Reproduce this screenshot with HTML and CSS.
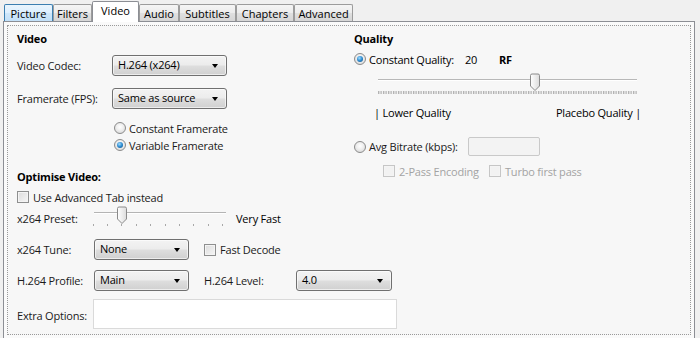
FILE: index.html
```html
<!DOCTYPE html>
<html>
<head>
<meta charset="utf-8">
<link rel="stylesheet" href="styles.css">
</head>
<body>
<div class="window">
  <div class="tabs">
    <div class="tab hover w49">Picture</div>
    <div class="tab w39">Filters</div>
    <div class="tab active w47">Video</div>
    <div class="tab w40">Audio</div>
    <div class="tab w57">Subtitles</div>
    <div class="tab w58">Chapters</div>
    <div class="tab w59">Advanced</div>
  </div>
  <div class="panel">
    <div class="inner">
      <div class="col left">
        <div class="heading">Video</div>
        <div class="row r-codec">
          <span class="lbl w95">Video Codec:</span>
          <div class="combo w115">H.264 (x264)</div>
        </div>
        <div class="row r-fps">
          <span class="lbl w95">Framerate (FPS):</span>
          <div class="combo w115">Same as source</div>
        </div>
        <div class="opt r-rad1"><span class="radio"></span>Constant Framerate</div>
        <div class="opt r-rad2"><span class="radio checked"></span>Variable Framerate</div>

        <div class="heading r-optim">Optimise Video:</div>
        <div class="opt r-adv"><span class="check"></span>Use Advanced Tab instead</div>
        <div class="row r-preset">
          <span class="lbl w76">x264 Preset:</span>
          <svg class="preset-slider" width="134" height="24" viewBox="0 0 134 24">
            <defs>
              <linearGradient id="thumbA" x1="0" y1="0" x2="1" y2="0">
                <stop offset="0" stop-color="#ffffff"/>
                <stop offset="1" stop-color="#dcdcdc"/>
              </linearGradient>
            </defs>
            <line x1="1" y1="6.5" x2="133" y2="6.5" stroke="#b4b4b4" stroke-width="1"/>
            <line x1="1" y1="7.5" x2="133" y2="7.5" stroke="#ffffff" stroke-width="1"/>
            <g fill="#a8a8a8">
              <rect x="0" y="18" width="1" height="2"/>
              <rect x="14" y="18" width="1" height="2"/>
              <rect x="28" y="18" width="1" height="2"/>
              <rect x="43" y="18" width="1" height="2"/>
              <rect x="57" y="18" width="1" height="2"/>
              <rect x="72" y="18" width="1" height="2"/>
              <rect x="86" y="18" width="1" height="2"/>
              <rect x="100" y="18" width="1" height="2"/>
              <rect x="115" y="18" width="1" height="2"/>
              <rect x="129" y="18" width="1" height="2"/>
            </g>
            <path d="M24.5 2.5 a1.5 1.5 0 0 1 1.5 -1.5 h6 a1.5 1.5 0 0 1 1.5 1.5 v10.5 l-4.5 4.5 l-4.5 -4.5 z" fill="url(#thumbA)" stroke="#8a8a8a" stroke-width="1"/>
          </svg>
          <span class="after-slider">Very Fast</span>
        </div>
        <div class="row r-tune">
          <span class="lbl w77">x264 Tune:</span>
          <div class="combo w95">None</div>
          <span class="opt inline ml15"><span class="check"></span>Fast Decode</span>
        </div>
        <div class="row r-profile">
          <span class="lbl w77">H.264 Profile:</span>
          <div class="combo w95">Main</div>
          <span class="lbl w92 ml15">H.264 Level:</span>
          <div class="combo w96">4.0</div>
        </div>
        <div class="row r-extra">
          <span class="lbl w76 extra-lbl">Extra Options:</span>
          <div class="textarea"></div>
        </div>
      </div>

      <div class="col right">
        <div class="heading">Quality</div>
        <div class="row r-cq">
          <span class="radio checked"></span>
          <span class="w96">Constant Quality:</span>
          <span class="w34">20</span>
          <span class="bold">RF</span>
        </div>
        <svg class="quality-slider" width="262" height="24" viewBox="0 0 262 24">
          <defs>
            <linearGradient id="thumbB" x1="0" y1="0" x2="1" y2="0">
              <stop offset="0" stop-color="#ffffff"/>
              <stop offset="1" stop-color="#dcdcdc"/>
            </linearGradient>
            <pattern id="ticks" x="2" y="0" width="2.5" height="24" patternUnits="userSpaceOnUse">
              <rect x="0" y="19" width="1.3" height="3" fill="#b0b0b0"/>
            </pattern>
          </defs>
          <line x1="2" y1="7.5" x2="261" y2="7.5" stroke="#b8b8b8" stroke-width="1"/>
          <line x1="2" y1="8.5" x2="261" y2="8.5" stroke="#ffffff" stroke-width="1"/>
          <rect x="2" y="19" width="259" height="3" fill="url(#ticks)"/>
          <path d="M154.5 3.5 a1.5 1.5 0 0 1 1.5 -1.5 h6 a1.5 1.5 0 0 1 1.5 1.5 v10.5 l-4.5 4.5 l-4.5 -4.5 z" fill="url(#thumbB)" stroke="#8a8a8a" stroke-width="1"/>
        </svg>
        <div class="scale-labels">
          <span>| Lower Quality</span>
          <span>Placebo Quality |</span>
        </div>
        <div class="row r-avg">
          <span class="radio"></span>
          <span class="w99">Avg Bitrate (kbps):</span>
          <div class="textbox disabled"></div>
        </div>
        <div class="row r-pass">
          <span class="opt inline disabled w106"><span class="check dis"></span>2-Pass Encoding</span>
          <span class="opt inline disabled"><span class="check dis"></span>Turbo first pass</span>
        </div>
      </div>
    </div>
  </div>
</div>
</body>
</html>
```

FILE: styles.css
```css
* { box-sizing: border-box; }

body {
  margin: 0;
  width: 700px;
  height: 338px;
  overflow: hidden;
  background: #f0f0f0;
  font-family: "Open Sans", "Noto Sans", sans-serif;
  font-size: 11px;
  letter-spacing: -0.2px;
  color: #1a1a1a;
}

.window {
  padding: 0 5px 0 3px;
  height: 338px;
  overflow: hidden;
}

/* tabs */
.tabs {
  display: flex;
  align-items: flex-end;
  height: 21px;
  padding-left: 1px;
  position: relative;
  z-index: 2;
  letter-spacing: 0;
}

.tab {
  height: 17px;
  border: 1px solid #9c9c9c;
  border-bottom: none;
  border-radius: 2px 2px 0 0;
  background: linear-gradient(#f5f5f5, #ececec 50%, #e0e0e0 50%, #d6d6d6);
  display: flex;
  align-items: center;
  justify-content: center;
  line-height: 15px;
  color: #000;
}

.tab.hover {
  border-color: #3c7fb1;
  background: linear-gradient(#eaf5fd, #dcefff 50%, #cfe7fa 50%, #c2e0f8);
}

.tab.active {
  height: 21px;
  margin-bottom: -1px;
  background: #ffffff;
  border-color: #8c8e94;
  padding-bottom: 3px;
}

.w39 { width: 39px; flex: none; }
.w40 { width: 40px; flex: none; }
.w47 { width: 47px; flex: none; }
.w49 { width: 49px; flex: none; }
.w57 { width: 57px; flex: none; }
.w58 { width: 58px; flex: none; }
.w59 { width: 59px; flex: none; }

/* panel */
.panel {
  border: 1px solid #8c8e94;
  border-bottom: none;
  background: #fafafa;
  padding: 3px 3px 0 3px;
  height: 317px;
}

.inner {
  border: 1px dotted #9a9a9a;
  background: #f7f7f7;
  height: 310px;
  padding: 5px 0 0 9px;
  display: grid;
  grid-template-columns: 337px 1fr;
}

.col {
  display: flex;
  flex-direction: column;
  align-items: flex-start;
  min-width: 0;
}

.heading {
  font-weight: bold;
  line-height: 15px;
  color: #000;
}

.row {
  display: flex;
  align-items: center;
  white-space: nowrap;
}

.lbl { flex: none; }
.w76 { width: 76px; flex: none; }
.w77 { width: 77px; flex: none; }
.w92 { width: 92px; flex: none; }
.w95 { width: 95px; flex: none; }
.w96 { width: 96px; flex: none; }
.w99 { width: 99px; flex: none; }
.w106 { width: 106px; flex: none; }
.w115 { width: 115px; flex: none; }
.w34 { width: 34px; flex: none; }
.ml15 { margin-left: 15px; }
.bold { font-weight: bold; color: #000; }

/* combo box */
.combo {
  height: 21px;
  border: 1px solid #707070;
  border-radius: 3px;
  background: linear-gradient(#f3f3f3, #ececec 48%, #dedede 52%, #d0d0d0);
  padding: 0 0 2px 5px;
  display: flex;
  align-items: center;
  position: relative;
  color: #000;
  box-shadow: inset 0 0 0 1px rgba(255,255,255,0.6);
}

.combo::after {
  content: "";
  position: absolute;
  right: 8px;
  top: 8px;
  border-left: 3.5px solid transparent;
  border-right: 3.5px solid transparent;
  border-top: 4px solid #000;
}

/* radio / checkbox */
.opt {
  display: flex;
  align-items: center;
  height: 16px;
  white-space: nowrap;
}

.opt.inline { display: inline-flex; }

.radio {
  flex: none;
  width: 12px;
  height: 12px;
  border-radius: 50%;
  border: 1px solid #8b8b8b;
  background: radial-gradient(circle at 50% 40%, #ffffff 0, #f0f0f0 40%, #d2d2d2 100%);
  margin-right: 3px;
  position: relative;
}

.radio.checked::after {
  content: "";
  position: absolute;
  left: 2px;
  top: 2px;
  width: 6px;
  height: 6px;
  border-radius: 50%;
  background: radial-gradient(circle at 40% 35%, #9fdcff 0, #2e8bd0 50%, #0d4a7c 100%);
}

.check {
  flex: none;
  width: 12px;
  height: 12px;
  border: 1px solid #8e8f8f;
  background: linear-gradient(135deg, #dcdcdc, #f6f6f6);
  box-shadow: inset 0 0 0 1px #f4f4f4;
  margin-right: 4px;
}

.check.dis {
  border-color: #c6c6c6;
  background: #f2f2f2;
}

.disabled { color: #a3a3a3; }

/* left column positions */
.r-codec { margin-top: 9px; }
.r-fps { margin-top: 12px; }
.r-rad1 { margin-top: 11px; padding-left: 97px; }
.r-rad2 { margin-top: 1px; padding-left: 97px; }
.r-optim { margin-top: 16px; }
.r-adv { margin-top: 5px; }
.r-preset { margin-top: 1px; height: 24px; }
.after-slider { margin-left: 9px; color: #000; }
.r-tune { margin-top: 9px; }
.r-profile { margin-top: 10px; }
.r-extra { margin-top: 8px; align-items: flex-start; }
.extra-lbl { padding-top: 9px; }

.textarea {
  width: 304px;
  height: 30px;
  border: 1px solid #dadada;
  background: #ffffff;
}

/* right column */
.r-cq { margin-top: 5px; height: 16px; color: #000; }
.quality-slider { margin-top: 5px; margin-left: 22px; display: block; }
.scale-labels {
  margin-top: 9px;
  margin-left: 20px;
  width: 267px;
  display: flex;
  justify-content: space-between;
  line-height: 15px;
  color: #000;
}
.r-avg { margin-top: 17px; height: 19px; }
.textbox {
  width: 72px;
  height: 19px;
  border: 1px solid #c9c9c9;
  border-radius: 2px;
  background: #f3f3f3;
}
.r-pass { margin-top: 7px; margin-left: 29px; height: 16px; }
```
